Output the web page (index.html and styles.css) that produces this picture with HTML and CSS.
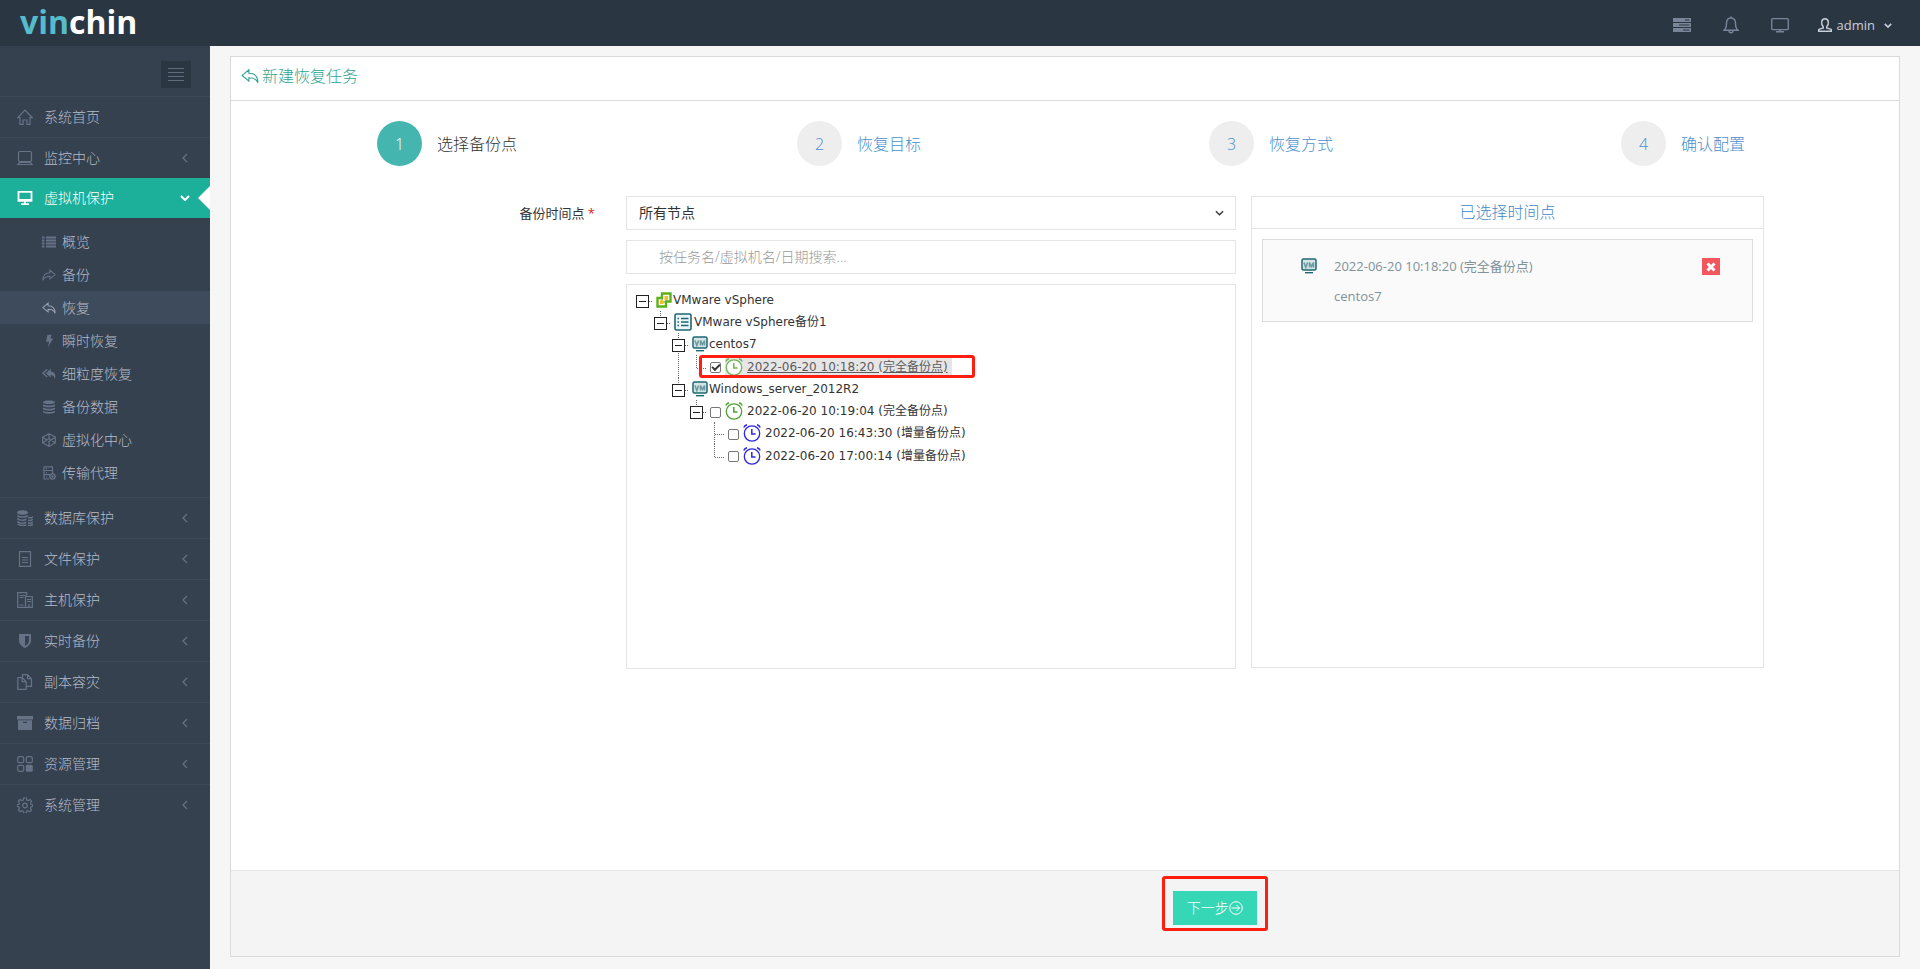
FILE: index.html
```html
<!DOCTYPE html>
<html lang="zh-CN">
<head>
<meta charset="utf-8">
<title>新建恢复任务</title>
<link rel="stylesheet" href="styles.css">
</head>
<body>
<svg class="sprite" aria-hidden="true">
  <symbol id="chev-left" viewBox="0 0 6 10"><path d="M5 1 1 5l4 4"/></symbol>
  <symbol id="chev-down" viewBox="0 0 10 6"><path d="M1 1l4 4 4-4"/></symbol>
  <symbol id="home" viewBox="0 0 16 16"><path d="M.7 8.600 8 1l7.300 7.600H13V15.300H10V11H6v4.300H3V8.600z"/></symbol>
  <symbol id="laptop" viewBox="0 0 16 16"><rect x="1.500" y="1.500" width="13" height="10" rx="1.500"/><path d="M2.500 12.500h11l1.800 2H.7z"/></symbol>
  <symbol id="desktop" viewBox="0 0 16 16"><path d="M1.500 1.800h13v9h-13zM1.500 9.800h13" stroke-width="1.800"/><path d="M8 11v3M4 14.200h8" stroke-width="1.800"/></symbol>
  <symbol id="list" viewBox="0 0 14 14"><path d="M0 2.500h2.500M4 2.500h10M0 5.500h2.500M4 5.500h10M0 8.500h2.500M4 8.500h10M0 11.500h2.500M4 11.500h10" stroke-width="1.800"/></symbol>
  <symbol id="share" viewBox="0 0 16 14"><path d="M1 13C1 7 4 4.500 9 4.500V1.500L15 6.500 9 11.500V8.500C5.500 8.500 3 9 1 13z"/></symbol>
  <symbol id="reply" viewBox="0 0 16 14"><path d="M15 13C15 7 12 4.500 7 4.500V1.500L1 6.500 7 11.500V8.500C10.500 8.500 13.500 9 15 13z"/></symbol>
  <symbol id="bolt" viewBox="0 0 14 14"><path class="solid" d="M5.500.8h4L8.300 4.500h2.900L5.800 13.500 7.200 7.700H4z"/></symbol>
  <symbol id="replyall" viewBox="0 0 16 14"><path class="solid" d="M10 4.200V1L4.500 6 10 11V8c2.500 0 4 1.200 4.500 5C16.500 8 14.500 4.700 10 4.200z"/><path d="M6 1.500 1 6l5 4.500" stroke-width="1.600"/></symbol>
  <symbol id="stack" viewBox="0 0 14 14"><path class="solid" d="M1 2.200C1-.2 13-.2 13 2.200 13 4.600 1 4.600 1 2.200zM1 4.300c2 1.700 10 1.700 12 0v1.700c-1.500 1.700-10.500 1.700-12 0zM1 7.500c2 1.700 10 1.700 12 0v1.700c-1.500 1.700-10.500 1.700-12 0zM1 10.700c2 1.700 10 1.700 12 0v1.500c-1.500 1.900-10.500 1.900-12 0z"/></symbol>
  <symbol id="codepen" viewBox="0 0 14 14"><path d="M7 .7 13.300 4v6L7 13.300.7 10V4zM7 .7V5M7 9v4.300M.7 4 7 8.600 13.300 4M.7 10 7 5.400l6.300 4.600"/></symbol>
  <symbol id="agent" viewBox="0 0 14 14"><path d="M2 .8h8.500v7M7 13H2V.8M2 4.500h8.500M2 8.700h6M4 2.700h1M4 6.700h1M4 11h1"/><circle cx="10.500" cy="10.500" r="2.600" stroke-width="1.400"/><circle cx="10.500" cy="10.500" r=".6"/></symbol>
  <symbol id="coins" viewBox="0 0 16 16"><path class="solid" d="M0 2.700C0-.6 11-.6 11 2.700 11 5.500 0 5.500 0 2.700z"/><path d="M.3 5.300c1.200 2.300 8.800 2.300 10.400.2M.3 8.300c1.200 2.300 7.200 2.300 9 .8M.3 11.300c1.200 2.300 7.200 2.300 9 .8M.8 14c2 1.900 7 1.900 8.500.9M11 7.500c2 .6 4 .3 4.700-1M11 10.200c2 .6 4 .3 4.700-1M11 12.800c2 .6 4 .3 4.700-1M11 15.200c2 .6 4 .3 4.700-1" stroke-width="1.500"/></symbol>
  <symbol id="file" viewBox="0 0 16 16"><path d="M2.500.7h11v14.600h-11zM5 6.500h6M5 9h6M5 11.500h6"/></symbol>
  <symbol id="host" viewBox="0 0 16 16"><path d="M9 15.300H.7V.7h9v3M2.500 3.500h6M2.500 5.500h4M2.500 13h4M8.500 15.300V4.500h6.800v10.800zM10 7.500h4M10 9.500h4M12 12v3"/></symbol>
  <symbol id="shield" viewBox="0 0 16 16"><path class="solid" d="M2 1h12v6.500c0 3.500-3 6-6 7.500-3-1.500-6-4-6-7.500zM8 3v10c2.500-1.500 4-3 4-5.500V3z" fill-rule="evenodd"/></symbol>
  <symbol id="copy" viewBox="0 0 16 16"><path d="M5.500 4.500V.7h5l4 4v7.600h-5M10.500.7v4h4M.8 3.700h4.400l4 4v7.600H.8zM5.200 3.700v4h4"/></symbol>
  <symbol id="archive" viewBox="0 0 16 16"><path class="solid" d="M0 1h16v3.500H0zM1 5.200h14V15H1zM6 6.700v1.300h4V6.700z" fill-rule="evenodd"/></symbol>
  <symbol id="grid" viewBox="0 0 16 16"><rect x=".7" y=".7" width="6" height="6" rx="1.500"/><rect x="9.300" y=".7" width="6" height="6" rx="1.500"/><rect x=".7" y="9.300" width="6" height="6" rx="1.500"/><rect class="solid" x="8.800" y="8.800" width="7" height="7" rx="1.500"/></symbol>
  <symbol id="gear" viewBox="0 0 16 16"><circle cx="8" cy="8.500" r="2.300"/><path d="M6.700 1h2.600l.5 2 1.400.6 1.800-1.100 1.600 1.700-1.100 1.800.5 1.300 2 .5v1.600l-2 .5-.5 1.300 1.100 1.800-1.700 1.700-1.800-1.100-1.300.5-.5 2H6.700l-.5-2-1.300-.5-1.800 1.100-1.700-1.700 1.100-1.800L2 9.900 0 9.400V7.800l2-.5.5-1.300-1.100-1.800L3 2.500l1.800 1.100L6.200 3z"/></symbol>
  <symbol id="tasks" viewBox="0 0 18 14"><path class="solid" d="M0 0h18v4H0zM0 5h18v4H0zM0 10h18v4H0z"/><path class="hole" d="M12 2h4.500M6 7h10.500M10 12h6.500"/></symbol>
  <symbol id="bell" viewBox="0 0 16 18"><path d="M1 14.300c2.500-2 2.500-4 2.500-7C3.500 4 5 2 8 2s4.500 2 4.500 5.300c0 3 0 5 2.500 7zM6 14.500c0 3 4 3 4 0M8 2V.5" stroke-width="1.400"/></symbol>
  <symbol id="monitor" viewBox="0 0 18 16"><rect x=".7" y="1.600" width="16.600" height="11" rx="1" stroke-width="1.300"/><path d="M9 12.600v2M5 14.800h8" stroke-width="1.400"/></symbol>
  <symbol id="user" viewBox="0 0 14 14"><path d="M5.300 8.800C2.700 6.500 3 .8 7 .8s4.300 5.700 1.700 8v1.100l4.600 1.500v1.800H.7v-1.800l4.600-1.500z" stroke-width="1.400"/></symbol>
  <symbol id="vsphere" viewBox="0 0 16 16"><path d="M6 1.500h8.500v8H10v5H1.500V6H6z" fill="#fff" stroke="#5cb319" stroke-width="2.400"/><path d="M6 6.500V10h4" fill="none" stroke="#5cb319"/><path d="M8.500 4H12v4H8.500zM4 8.500h3.500V12H4z" fill="#fbb829" stroke="none"/></symbol>
  <symbol id="job" viewBox="0 0 18 18"><rect x="1" y="1" width="16" height="16" rx="1.500" fill="#eef5f6" stroke="#1d6872" stroke-width="1.600"/><path d="M3.500 5.500H5M7 5.500h7.500M3.500 9H5M7 9h7.500M3.500 12.500H5M7 12.500h7.500" stroke="#1d6872" stroke-width="1.300"/></symbol>
  <symbol id="vm" viewBox="0 0 16 16"><rect x="1" y="1" width="14" height="11" rx="1.500" fill="#d5e4e6" stroke="#1d6872" stroke-width="1.500"/><path d="M3 4.500l1.800 5 1.800-5M8.500 9.500v-5l2 4 2-4v5" fill="none" stroke="#6d9ca3" stroke-width="1.600"/><path d="M4 14.700h8" stroke="#1d6872" stroke-width="1.400"/></symbol>
  <symbol id="clock" viewBox="0 0 18 18"><circle cx="9" cy="9.500" r="7.700" fill="#fff" stroke-width="1.300"/><path d="M8.800 5v5h3.700M.8 3.500Q1.800 1.300 4 .8M17.200 3.500Q16.200 1.300 14 .8" fill="none" stroke-width="1.500"/></symbol>
  <symbol id="next" viewBox="0 0 14 14"><circle cx="7" cy="7" r="6.300"/><path d="M2.500 7h8M7.500 4l3 3-3 3"/></symbol>
</svg>

<header class="topbar">
  <a class="logo" href="#"><span class="logo-vin">vin</span>chin</a>
  <nav class="tools">
    <button type="button" class="tool" aria-label="任务"><svg width="18" height="14"><use href="#tasks"/></svg></button>
    <button type="button" class="tool" aria-label="告警"><svg width="16" height="18"><use href="#bell"/></svg></button>
    <button type="button" class="tool" aria-label="大屏"><svg width="18" height="16"><use href="#monitor"/></svg></button>
    <button type="button" class="tool account"><svg width="14" height="14"><use href="#user"/></svg>admin<svg class="caret" width="8" height="5"><use href="#chev-down"/></svg></button>
  </nav>
</header>

<div class="page">
  <aside class="sidebar">
    <div class="toggle-row"><button type="button" class="toggle" aria-label="菜单"><span></span><span></span><span></span><span></span></button></div>
    <ul class="menu">
      <li><a href="#"><svg><use href="#home"/></svg>系统首页</a></li>
      <li><a href="#"><svg><use href="#laptop"/></svg>监控中心<svg class="arrow"><use href="#chev-left"/></svg></a></li>
      <li class="active"><a href="#"><svg><use href="#desktop"/></svg>虚拟机保护<svg class="arrow-down"><use href="#chev-down"/></svg></a>
        <ul class="submenu">
          <li><a href="#"><svg><use href="#list"/></svg>概览</a></li>
          <li><a href="#"><svg><use href="#share"/></svg>备份</a></li>
          <li class="current"><a href="#"><svg><use href="#reply"/></svg>恢复</a></li>
          <li><a href="#"><svg><use href="#bolt"/></svg>瞬时恢复</a></li>
          <li><a href="#"><svg><use href="#replyall"/></svg>细粒度恢复</a></li>
          <li><a href="#"><svg><use href="#stack"/></svg>备份数据</a></li>
          <li><a href="#"><svg><use href="#codepen"/></svg>虚拟化中心</a></li>
          <li><a href="#"><svg><use href="#agent"/></svg>传输代理</a></li>
        </ul>
      </li>
      <li><a href="#"><svg><use href="#coins"/></svg>数据库保护<svg class="arrow"><use href="#chev-left"/></svg></a></li>
      <li><a href="#"><svg><use href="#file"/></svg>文件保护<svg class="arrow"><use href="#chev-left"/></svg></a></li>
      <li><a href="#"><svg><use href="#host"/></svg>主机保护<svg class="arrow"><use href="#chev-left"/></svg></a></li>
      <li><a href="#"><svg><use href="#shield"/></svg>实时备份<svg class="arrow"><use href="#chev-left"/></svg></a></li>
      <li><a href="#"><svg><use href="#copy"/></svg>副本容灾<svg class="arrow"><use href="#chev-left"/></svg></a></li>
      <li><a href="#"><svg><use href="#archive"/></svg>数据归档<svg class="arrow"><use href="#chev-left"/></svg></a></li>
      <li><a href="#"><svg><use href="#grid"/></svg>资源管理<svg class="arrow"><use href="#chev-left"/></svg></a></li>
      <li><a href="#"><svg><use href="#gear"/></svg>系统管理<svg class="arrow"><use href="#chev-left"/></svg></a></li>
    </ul>
  </aside>

  <main class="main">
    <form class="card">
      <h1 class="card-title"><svg width="18" height="16"><use href="#reply"/></svg>新建恢复任务</h1>
      <div class="card-body">
        <ol class="steps">
          <li class="on"><span class="num">1</span>选择备份点</li>
          <li><span class="num">2</span>恢复目标</li>
          <li><span class="num">3</span>恢复方式</li>
          <li><span class="num">4</span>确认配置</li>
        </ol>
        <div class="fields">
          <label class="field-label" for="node">备份时间点 <span class="req">*</span></label>
          <div class="picker">
            <div class="select">
              <select id="node"><option>所有节点</option></select>
              <svg width="9" height="6"><use href="#chev-down"/></svg>
            </div>
            <input class="search" type="text" aria-label="搜索" placeholder="按任务名/虚拟机名/日期搜索...">
            <div class="tree-box">
              <ul class="tree">
                <li class="root"><div class="row"><span class="switch open"></span><svg class="ic"><use href="#vsphere"/></svg><span>VMware vSphere</span></div>
                  <ul>
                    <li><div class="row"><span class="switch open"></span><svg class="ic big"><use href="#job"/></svg><span>VMware vSphere备份1</span></div>
                      <ul>
                        <li><div class="row"><span class="switch open"></span><svg class="ic"><use href="#vm"/></svg><span>centos7</span></div>
                          <ul>
                            <li><div class="row leaf marked"><span class="switch"></span><input type="checkbox" id="p1" checked><label class="point picked" for="p1"><svg class="full"><use href="#clock"/></svg><span>2022-06-20 10:18:20 (完全备份点)</span></label></div></li>
                          </ul>
                        </li>
                        <li><div class="row"><span class="switch open"></span><svg class="ic"><use href="#vm"/></svg><span>Windows_server_2012R2</span></div>
                          <ul>
                            <li><div class="row"><span class="switch open"></span><input type="checkbox" id="p2"><label class="point" for="p2"><svg class="full"><use href="#clock"/></svg><span>2022-06-20 10:19:04 (完全备份点)</span></label></div>
                              <ul>
                                <li><div class="row"><span class="switch"></span><input type="checkbox" id="p3"><label class="point" for="p3"><svg class="incr"><use href="#clock"/></svg><span>2022-06-20 16:43:30 (增量备份点)</span></label></div></li>
                                <li><div class="row leaf"><span class="switch"></span><input type="checkbox" id="p4"><label class="point" for="p4"><svg class="incr"><use href="#clock"/></svg><span>2022-06-20 17:00:14 (增量备份点)</span></label></div></li>
                              </ul>
                            </li>
                          </ul>
                        </li>
                      </ul>
                    </li>
                  </ul>
                </li>
              </ul>
            </div>
          </div>
          <section class="chosen">
            <h2>已选择时间点</h2>
            <div class="chosen-item">
              <svg width="16" height="16"><use href="#vm"/></svg>
              <div class="chosen-text"><p>2022-06-20 10:18:20 (完全备份点)</p><p>centos7</p></div>
              <button type="button" class="remove" aria-label="移除"><svg width="10" height="10" viewBox="0 0 10 10"><path d="M1.500 1.500l7 7M8.500 1.500l-7 7"/></svg></button>
            </div>
          </section>
        </div>
      </div>
      <div class="card-foot">
        <div class="next-wrap"><button type="button" class="next">下一步<svg width="14" height="14"><use href="#next"/></svg></button></div>
      </div>
    </form>
  </main>
</div>
</body>
</html>
```

FILE: styles.css
```css
*, *::before, *::after { box-sizing: border-box; }
body {
  margin: 0;
  min-height: 100vh;
  display: flex;
  flex-direction: column;
  background: #f6f6f6;
  color: #333;
  font: 14px/20px "Open Sans", "Noto Sans CJK SC", sans-serif;
}
ul, ol { list-style: none; margin: 0; padding: 0; }
a { color: inherit; text-decoration: none; }
button, input, select { font: inherit; color: inherit; margin: 0; }
button { border: 0; background: none; padding: 0; cursor: pointer; }
svg { fill: none; stroke: currentColor; flex: none; }
.solid { fill: currentColor; stroke: none; }
.hole { stroke: #2b3643; }
.sprite { position: absolute; width: 0; height: 0; }

/* top bar */
.topbar {
  height: 46px;
  background: #2b3643;
  display: flex;
  align-items: center;
  justify-content: space-between;
  padding: 0 28px 0 20px;
}
.logo { color: #fff; font: 700 32px/40px "Open Sans", sans-serif; padding-bottom: 2px; }
.logo-vin { color: #55bccb; }
.tools { display: flex; align-items: center; padding-top: 4px; }
.tool { display: flex; align-items: center; color: #79869a; margin-right: 32px; }
.account { margin-right: 0; margin-left: -3px; font-size: 13px; color: #c6cfda; gap: 5px; }
.account .caret { margin-left: 4px; stroke-width: 2; }

.page { flex: 1; display: flex; }

/* sidebar */
.sidebar { width: 210px; flex: none; background: #364150; }
.toggle-row { display: flex; justify-content: flex-end; padding: 15px 19px 8px 0; }
.toggle {
  width: 30px;
  height: 27px;
  background: #2b3643;
  display: flex;
  flex-direction: column;
  justify-content: center;
  align-items: center;
  gap: 3px;
}
.toggle span { width: 16px; height: 1px; background: #606c7d; }
.menu > li > a {
  position: relative;
  display: flex;
  align-items: center;
  height: 41px;
  border-top: 1px solid #3d4957;
  padding: 0 20px 0 17px;
  color: #b4bcc8;
  font-weight: 300;
}
.menu svg { width: 16px; height: 16px; margin-right: 11px; color: #667386; stroke-width: 1.200; }
.menu svg.arrow { width: 6px; height: 10px; margin: 0 2px 0 auto; }
.menu svg.arrow-down { width: 10px; height: 6px; margin: 0 0 0 auto; color: #fff; stroke-width: 2; }
.menu > li.active > a { height: 40px; border: 0; background: #1caf9a; color: #fff; }
.menu > li.active > a > svg { color: #fff; }
.menu > li.active > a::after {
  content: "";
  position: absolute;
  right: 0;
  top: 8px;
  border: 12px solid transparent;
  border-right-color: #fff;
  border-left: 0;
}
.submenu { padding: 7px 0 8px; }
.submenu a {
  display: flex;
  align-items: center;
  height: 33px;
  padding-left: 42px;
  color: #b4bcc8;
  font-weight: 300;
}
.submenu svg { width: 14px; height: 14px; margin-right: 6px; }
.submenu .current a { background: #3e4b5c; }
.submenu .current svg { color: #98a3b3; }

/* card */
.main { flex: 1; display: flex; padding: 10px 20px 12px; }
.card {
  flex: 1;
  display: flex;
  flex-direction: column;
  background: #fff;
  border: 1px solid #dadada;
}
.card-title {
  margin: 0;
  height: 44px;
  display: flex;
  align-items: center;
  gap: 3px;
  padding: 0 10px 6px;
  border-bottom: 1px solid #dadada;
  color: #2fa392;
  font-size: 16px;
  font-weight: 300;
}
.card-body { flex: 1; padding: 20px 10px; }
.steps { display: grid; grid-template-columns: repeat(4, 1fr); margin-bottom: 30px; }
.steps li {
  display: flex;
  justify-content: center;
  align-items: center;
  gap: 15px;
  color: #4a90cc;
  font-size: 16px;
  font-weight: 300;
}
.num {
  width: 45px;
  height: 45px;
  border-radius: 50%;
  background: #eee;
  display: flex;
  align-items: center;
  justify-content: center;
}
.steps .on { color: #333; }
.on .num { background: #45b6af; color: #fff; }

.fields { display: grid; grid-template-columns: 370fr 610fr 513fr 110fr; column-gap: 15px; align-items: start; }
.field-label { text-align: right; font-size: 13px; padding: 7px 16px 0 0; }
.req { color: #e02222; }
.picker { display: flex; flex-direction: column; gap: 10px; min-width: 0; }
.select { display: grid; align-items: center; }
.select select, .search {
  width: 100%;
  height: 34px;
  border: 1px solid #e5e5e5;
  border-radius: 0;
  background: #fff;
  padding: 0 12px;
  outline: 0;
}
.select select { appearance: none; grid-area: 1 / 1; }
.select svg { grid-area: 1 / 1; justify-self: end; margin-right: 12px; stroke-width: 1.500; }
.search { padding: 0 12px 2px 32px; }
.search::placeholder { color: #999; font-weight: 300; }
.tree-box { border: 1px solid #e5e5e5; min-height: 385px; padding: 4px 7px; }

/* tree of restore points */
.tree { font: 12px/22px "DejaVu Sans", "Noto Sans CJK SC", sans-serif; }
.tree ul { padding-left: 18px; }
.tree li { position: relative; }
.tree li::before {
  content: "";
  position: absolute;
  left: 8px;
  top: 0;
  bottom: 0;
  border-left: 1px dotted #666;
}
.tree li:last-child::before { bottom: auto; height: 13px; }
.tree .root::before { display: none; }
.row { position: relative; display: flex; align-items: center; height: 22px; white-space: nowrap; }
.leaf { height: 23px; }
.switch { position: relative; width: 18px; height: 18px; margin-right: 4px; }
.switch::before {
  content: "";
  position: absolute;
  left: 9px;
  right: 0;
  top: 10px;
  border-top: 1px dotted #666;
}
.open::after {
  content: "";
  position: absolute;
  left: 2px;
  top: 4px;
  width: 13px;
  height: 13px;
  border: 1px solid #222;
  background: linear-gradient(#222, #222) center / 7px 1px no-repeat #fff;
}
.ic { width: 16px; height: 16px; margin-right: 1px; }
.ic.big { width: 18px; height: 18px; margin-right: 2px; }
.row input {
  appearance: none;
  display: grid;
  place-items: center;
  width: 11px;
  height: 11px;
  border: 1px solid #777;
  border-radius: 2px;
  background: #fff;
  margin: 2px 4px 0 0;
}
.row input:checked::before {
  content: "";
  width: 8px;
  height: 5px;
  border: solid #333;
  border-width: 0 0 2px 2px;
  rotate: -45deg;
  margin-bottom: 2px;
}
.point { display: flex; align-items: center; gap: 4px; height: 18px; }
.point svg { width: 18px; height: 18px; }
.full { color: #4da32f; }
.incr { color: #2a24e6; }
.picked { background: #e0e0e0; text-decoration: underline; padding-right: 4px; opacity: 0.800; }
.marked::after {
  content: "";
  position: absolute;
  left: 11px;
  top: 0;
  width: 276px;
  height: 23px;
  border: 3px solid #ff1e0f;
  border-radius: 3px;
}

/* chosen restore points */
.chosen { border: 1px solid #e5e5e5; min-height: 472px; }
.chosen h2 {
  margin: 0 0 10px;
  height: 32px;
  line-height: 30px;
  border-bottom: 1px solid #e5e5e5;
  text-align: center;
  color: #3f88c8;
  font-size: 16px;
  font-weight: 300;
}
.chosen-item {
  display: flex;
  align-items: flex-start;
  margin: 0 10px;
  padding: 18px 32px 15px 38px;
  background: #fafafa;
  border: 1px solid #dcdcdc;
  color: #7f9299;
  font-size: 13px;
}
.chosen-text { flex: 1; padding-left: 17px; margin-top: -2px; }
.chosen-text p { margin: 0 0 10px; }
.chosen-text p:last-child { margin: 0; }
.remove { width: 18px; height: 17px; background: #f3565d; color: #fff; display: grid; place-items: center; }
.remove svg { stroke-width: 3; }

.card-foot {
  border-top: 1px solid #e5e5e5;
  background: #f4f4f4;
  padding: 5px 0 25px 55.800%;
  display: flex;
}
.next-wrap { border: 3px solid #ff1e0f; border-radius: 3px; padding: 12px 8px 3px; }
.next {
  height: 34px;
  padding: 0 14px;
  background: #36d7b7;
  color: #fff;
  display: flex;
  align-items: center;
  font-weight: 300;
}
```
